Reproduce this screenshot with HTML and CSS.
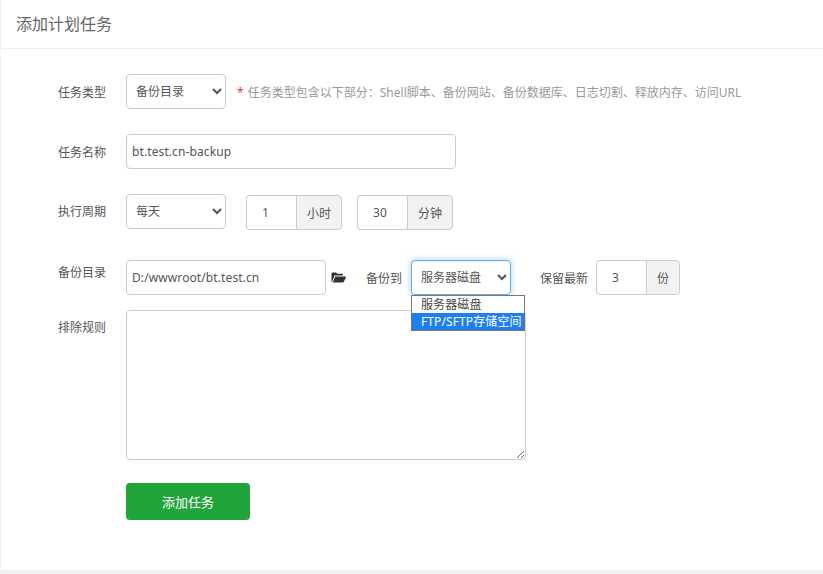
FILE: index.html
```html
<!DOCTYPE html>
<html lang="zh">
<head>
<meta charset="utf-8">
<title>添加计划任务</title>
<link rel="stylesheet" href="styles.css">
</head>
<body>
<main class="card">
  <h1 class="title">添加计划任务</h1>
  <form class="form">
    <div class="row row-type">
      <span class="label">任务类型</span>
      <select class="select"><option>备份目录</option></select>
      <p class="hint"><span class="star">*</span> 任务类型包含以下部分<span class="colon">：</span>Shell脚本、备份网站、备份数据库、日志切割、释放内存、访问URL</p>
    </div>
    <div class="row row-name">
      <span class="label">任务名称</span>
      <input class="input input-name" value="bt.test.cn-backup">
    </div>
    <div class="row row-cycle">
      <span class="label label-cycle">执行周期</span>
      <select class="select"><option>每天</option></select>
      <div class="group group-hour"><input class="input num" value="1"><span class="addon addon-wide">小时</span></div>
      <div class="group group-min"><input class="input num" value="30"><span class="addon addon-wide">分钟</span></div>
    </div>
    <div class="row row-backup">
      <span class="label label-high">备份目录</span>
      <input class="input input-path" value="D:/wwwroot/bt.test.cn">
      <svg class="folder" viewBox="0 0 15 11" width="15" height="11" aria-hidden="true"><path d="M0.5 10V1.4C0.5 .8.9.4 1.5.4H5L6.2 1.8H11C11.6 1.8 12 2.2 12 2.8V3.6H3.6L.9 10.3C.7 10.4.5 10.3.5 10Z"/><path d="M4.2 4.6H14.4C14.9 4.6 15.1 5 14.9 5.4L12.7 10C12.5 10.4 12.2 10.6 11.8 10.6H1.8Z"/></svg>
      <span class="text-to">备份到</span>
      <div class="drop">
        <select class="select select-focus"><option>服务器磁盘</option></select>
        <ul class="menu">
          <li class="menu-item">服务器磁盘</li>
          <li class="menu-item menu-active">FTP/SFTP存储空间</li>
        </ul>
      </div>
      <span class="text-keep">保留最新</span>
      <div class="group"><input class="input num" value="3"><span class="addon">份</span></div>
    </div>
    <div class="row row-exclude">
      <span class="label label-high">排除规则</span>
      <textarea class="area"></textarea>
    </div>
    <div class="row row-submit">
      <button class="btn" type="button">添加任务</button>
    </div>
  </form>
</main>
</body>
</html>
```
FILE: styles.css
```css
* { box-sizing: border-box; }
html, body { margin: 0; height: 100%; overflow: hidden; }
body {
  background: #f2f2f2;
  font-family: "Noto Sans", "Noto Sans CJK SC", sans-serif;
  font-size: 12px;
  color: #555;
}
.card {
  margin-left: 1px;
  height: 570px;
  background: #fff;
}
.title {
  margin: 0;
  height: 49px;
  padding-left: 15px;
  border-bottom: 1px solid #eee;
  font-size: 16px;
  font-weight: 400;
  line-height: 48px;
  color: #666;
}
.form { padding: 25px 0 0 57px; }
.row { display: flex; align-items: center; }
.row-name { margin-top: 25px; }
.row-cycle { margin-top: 25px; align-items: flex-start; }
.row-backup { margin-top: 30px; }
.row-exclude { margin-top: 15px; align-items: flex-start; }
.row-submit { margin-top: 23px; padding-left: 68px; }
.label { width: 68px; flex: none; }
.label-cycle { line-height: 35px; }
.label-high { align-self: flex-start; line-height: 26px; }
.row-exclude .label-high { line-height: 36px; }
.select {
  width: 100px;
  height: 35px;
  padding: 0 5px;
  border: 1px solid #ccc;
  border-radius: 4px;
  background-color: #fff;
  font: inherit;
  color: #555;
}
.select-focus {
  border-color: #66afe9;
  box-shadow: inset 0 1px 1px rgba(0,0,0,.075), 0 0 6px rgba(102,175,233,.6);
  outline: none;
}
.hint { margin: 0 0 0 11px; color: #999; white-space: nowrap; }
.colon { font-family: "Noto Sans CJK TC", sans-serif; }
.star { color: #e33; margin-right: 1px; }
.input {
  height: 35px;
  padding: 0 5px;
  border: 1px solid #ccc;
  border-radius: 4px;
  background: #fff;
  font: inherit;
  letter-spacing: .1px;
  color: #555;
  outline: none;
}
.input-name { width: 330px; }
.input-path { width: 200px; }
.group { display: flex; height: 35px; }
.row-cycle .group { margin-top: 1px; }
.group-hour { margin-left: 20px; }
.group-min { margin-left: 15px; }
.num {
  width: 50px;
  padding-left: 15px;
  border-right: 0;
  border-radius: 4px 0 0 4px;
}
.addon {
  display: flex;
  width: 34px;
  align-items: center;
  justify-content: center;
  border: 1px solid #ccc;
  border-radius: 0 4px 4px 0;
  background: #f2f2f2;
}
.addon-wide { width: 46px; }
.folder { margin-left: 5px; flex: none; fill: #333; }
.text-to { margin-left: 20px; margin-right: 9px; }
.drop { position: relative; }
.menu {
  position: absolute;
  left: 0;
  top: 35px;
  width: 114px;
  margin: 0;
  padding: 0;
  list-style: none;
  border: 1px solid #767676;
  background: #fff;
  z-index: 2;
}
.menu-item {
  height: 17px;
  padding-left: 9px;
  line-height: 17px;
  white-space: nowrap;
  font-size: 12px;
  letter-spacing: .1px;
  color: #444;
}
.menu-active { background: #1e80f0; color: #fff; }
.text-keep { margin-left: 29px; margin-right: 8px; }
.area {
  display: block;
  width: 400px;
  height: 150px;
  border: 1px solid #ccc;
  border-radius: 4px;
  outline: none;
}
.btn {
  width: 124px;
  height: 37px;
  border: 0;
  border-radius: 4px;
  background: #20a53a;
  color: #fff;
  font: inherit;
  font-size: 13px;
}
```
